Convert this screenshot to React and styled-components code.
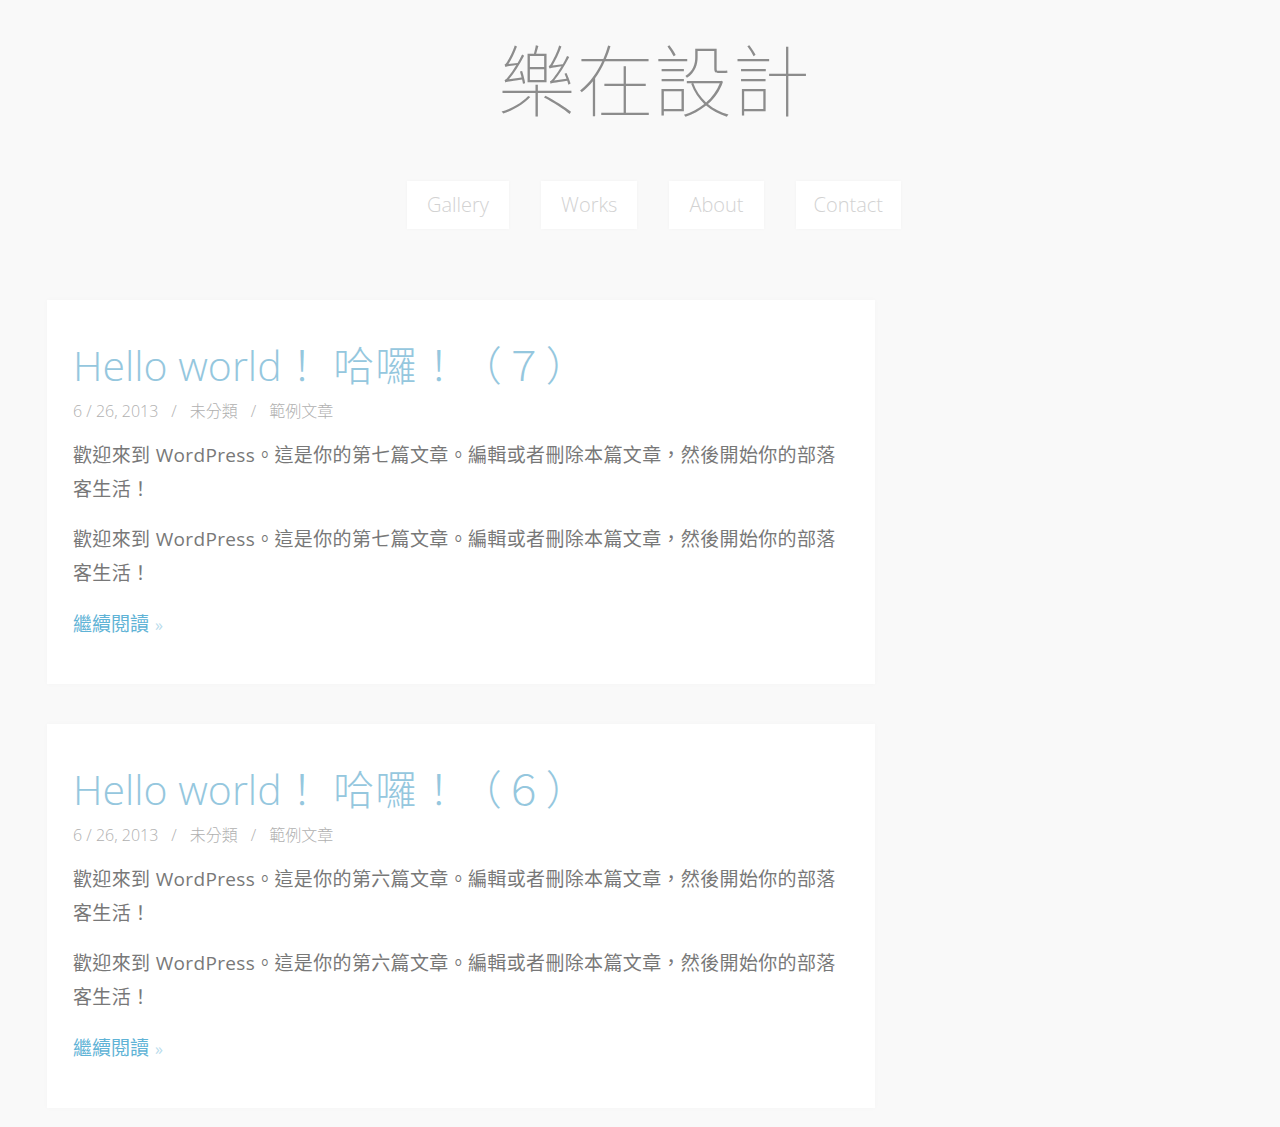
import React from "react";
import styled, { createGlobalStyle } from "styled-components";

const Global = createGlobalStyle`
  html, body { margin: 0; padding: 0; background: #f9f9f9; }
  body { font-family: "Open Sans", "Noto Sans CJK TC", sans-serif; }
  * { box-sizing: border-box; }
`;

const Page = styled.div`
  min-height: 1127px;
  background: #f9f9f9;
`;

const Header = styled.header`
  display: flex;
  flex-direction: column;
  align-items: center;
  padding: 38px 0 0 28px;
`;

const SiteTitle = styled.h1`
  margin: 0;
  font-family: "Noto Sans CJK TC", sans-serif;
  font-weight: 100;
  font-size: 78px;
  line-height: 78px;
  color: #8c8c8c;
`;

const Nav = styled.nav`
  display: flex;
  gap: 32px;
  margin-top: 65px;
`;

const NavItem = styled.a`
  display: block;
  height: 48px;
  line-height: 48px;
  padding: 0 ${(p) => p.$pad}px;
  background: #ffffff;
  box-shadow: 0 0 4px rgba(0, 0, 0, 0.03);
  font-family: "Open Sans", sans-serif;
  font-weight: 300;
  font-size: 20px;
  color: #d2d2d2;
  text-decoration: none;
`;

const Main = styled.main`
  display: flex;
  flex-direction: column;
  gap: 40px;
  padding: 71px 0 40px 47px;
`;

const Card = styled.article`
  width: 828px;
  background: #ffffff;
  box-shadow: 0 0 6px rgba(0, 0, 0, 0.025);
  padding: 40px 26px 47px 26px;
`;

const PostTitle = styled.h2`
  margin: 0;
  font-family: "Open Sans", "Noto Sans CJK TC", sans-serif;
  font-weight: 300;
  font-size: 41px;
  line-height: 50px;
  color: #95c7de;
  white-space: nowrap;
`;

const Wide = styled.span`
  letter-spacing: 1.5px;
`;

const Meta = styled.div`
  margin-top: 10px;
  font-family: "Open Sans", "Noto Sans CJK TC", sans-serif;
  font-weight: 300;
  font-size: 16px;
  line-height: 22px;
  color: #b0b0b0;
`;

const Sep = styled.span`
  margin: 0 13px;
`;

const Body = styled.p`
  margin: 16px 0 0 0;
  width: 770px;
  font-family: "Open Sans", "Noto Sans CJK TC", sans-serif;
  font-size: 19px;
  line-height: 34px;
  letter-spacing: 0.35px;
  color: #787878;
`;

const ReadMore = styled.a`
  display: block;
  margin-top: 21px;
  font-family: "Noto Sans CJK TC", sans-serif;
  font-size: 19px;
  line-height: 24px;
  color: #5fb3d6;
  text-decoration: none;
`;

const Arrow = styled.span`
  font-family: "Open Sans", sans-serif;
  font-size: 16px;
  color: #b9dcec;
  margin-left: 6px;
`;

const navItems = [
  { t: "Gallery", pad: 20 },
  { t: "Works", pad: 20 },
  { t: "About", pad: 20 },
  { t: "Contact", pad: 18 },
];

const posts = [
  { n: "７", ord: "七" },
  { n: "６", ord: "六" },
];

export default function App() {
  return (
    <Page>
      <Global />
      <Header>
        <SiteTitle>樂在設計</SiteTitle>
        <Nav>
          {navItems.map((n) => (
            <NavItem key={n.t} href="#" $pad={n.pad}>
              {n.t}
            </NavItem>
          ))}
        </Nav>
      </Header>
      <Main>
        {posts.map((p) => {
          const text = `歡迎來到 WordPress。這是你的第${p.ord}篇文章。編輯或者刪除本篇文章，然後開始你的部落客生活！`;
          return (
            <Card key={p.n}>
              <PostTitle>
                Hello world！ <Wide>哈囉！（{p.n}）</Wide>
              </PostTitle>
              <Meta>
                6 / 26, 2013<Sep>/</Sep>未分類<Sep>/</Sep>範例文章
              </Meta>
              <Body>{text}</Body>
              <Body>{text}</Body>
              <ReadMore href="#">
                繼續閱讀<Arrow>»</Arrow>
              </ReadMore>
            </Card>
          );
        })}
      </Main>
    </Page>
  );
}
